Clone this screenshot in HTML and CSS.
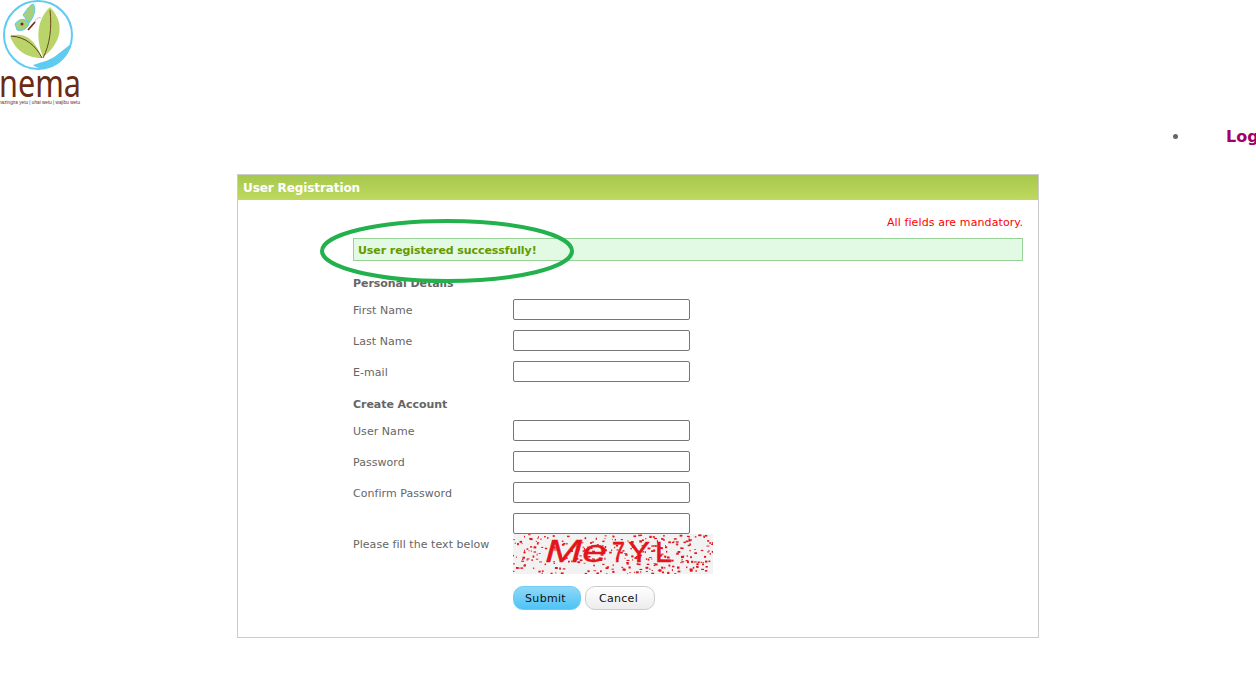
FILE: index.html
```html
<!DOCTYPE html>
<html lang="en">
<head>
    <meta charset="UTF-8">
    <meta name="viewport" content="width=device-width, initial-scale=1.0">
    <title>User Registration</title>
    <link rel="stylesheet" href="styles.css">
</head>
<body>
    <div class="header">
        <svg class="logo" width="90" height="110" viewBox="0 0 90 110">
            <circle cx="38" cy="35" r="34" fill="#fff" stroke="#5fcbf1" stroke-width="2"/>
            <!-- big leaf -->
            <path d="M50 7C36 20 36 40 43 57C58 46 68 26 50 7Z" fill="#b9d56a"/>
            <path d="M50 10C52 28 50 44 43 58" fill="none" stroke="#6b4a1e" stroke-width="1"/>
            <!-- small leaf -->
            <path d="M10 36C20 33 33 34 42 58C28 58 16 52 10 36Z" fill="#b9d56a"/>
            <path d="M11 36C26 37 36 46 42 58" fill="none" stroke="#6b3a1e" stroke-width="1"/>
            <!-- butterfly -->
            <path d="M23 15C27 9 30 5 33 4C37 8 34 17 29 23Z" fill="#a5d07c" stroke="#5fcbf1" stroke-width="1"/>
            <path d="M15 24C19 18 26 18 29 23C28 29 21 32 17 30Z" fill="#a5d07c" stroke="#5fcbf1" stroke-width="1"/>
            <circle cx="22" cy="24" r="1.500" fill="#7a2a1a"/>
            <path d="M28 30L35 22" stroke="#6b2a14" stroke-width="1.600"/>
            <path d="M35 22C36 18 39 17 41 18" fill="none" stroke="#a88" stroke-width=".6"/>
            <!-- hand -->
            <path d="M33 65C42 62 52 60 58 54C63 50 67 47 71 44C70 54 60 65 48 68C42 69 36 68 33 65Z" fill="#5fcbf1"/>
            <text class="logo-name" x="-1" y="97" textLength="82" lengthAdjust="spacingAndGlyphs">nema</text>
            <text class="logo-tag" x="-1" y="104" textLength="81" lengthAdjust="spacingAndGlyphs">nazingira yetu | uhai wetu | wajibu wetu</text>
        </svg>
    </div>

    <ul class="nav">
        <li><a href="#">Login</a></li>
    </ul>

    <div class="box">
        <div class="box-title">User Registration</div>
        <div class="box-body">
            <p class="mandatory">All fields are mandatory.</p>
            <div class="message">User registered successfully!</div>
            <svg class="circled" width="258" height="68" viewBox="0 0 258 68">
                <ellipse cx="128" cy="33" rx="125" ry="30" fill="none" stroke="#22b14c" stroke-width="4"/>
            </svg>

            <h3 class="section first">Personal Details</h3>
            <div class="row"><label>First Name</label><input type="text"></div>
            <div class="row"><label>Last Name</label><input type="text"></div>
            <div class="row"><label>E-mail</label><input type="text"></div>

            <h3 class="section">Create Account</h3>
            <div class="row"><label>User Name</label><input type="text"></div>
            <div class="row"><label>Password</label><input type="password"></div>
            <div class="row"><label>Confirm Password</label><input type="password"></div>

            <div class="row captcha-row">
                <label>Please fill the text below</label>
                <div class="captcha">
                    <input type="text">
                    <svg id="captchaImg" class="captcha-img" width="200" height="40" viewBox="0 0 200 40">
                        <rect width="200" height="40" fill="#f2f2f2"/>
                        <g id="captchaDots" fill="#e2141c"></g>
                        <text class="captcha-big" x="32" y="28" textLength="62" lengthAdjust="spacingAndGlyphs">Me</text>
                        <text class="captcha-small" x="99" y="28" textLength="13" lengthAdjust="spacingAndGlyphs">7</text>
                        <text class="captcha-small" x="115" y="28" textLength="22" lengthAdjust="spacingAndGlyphs">Y</text>
                        <text class="captcha-small" x="142" y="28" textLength="17" lengthAdjust="spacingAndGlyphs">L</text>
                    </svg>
                </div>
            </div>

            <div class="buttons">
                <button class="btn btn-submit">Submit</button>
                <button class="btn btn-cancel">Cancel</button>
            </div>
        </div>
    </div>

    <script src="captcha.js"></script>
</body>
</html>
```

FILE: styles.css
```css
* {
    box-sizing: border-box;
}

html, body {
    overflow: hidden;
}

body {
    margin: 0;
    height: 692px;
    background-color: #fff;
    font-family: 'DejaVu Sans', Verdana, sans-serif;
    font-size: 11px;
    color: #666;
}

.header {
    height: 126px;
}

.logo {
    display: block;
}

.logo-name {
    font-family: 'Noto Sans', sans-serif;
    font-size: 39px;
    fill: #6b2a14;
}

.logo-tag {
    font-family: 'Liberation Sans', sans-serif;
    font-size: 6px;
    fill: #6b2a14;
}

.nav {
    margin: 0;
    padding: 0 0 0 1190px;
    height: 48px;
    width: 1400px;
    color: #666;
}

.nav li {
    padding-left: 36px;
    line-height: 21px;
    font-size: 16px;
}

.nav a {
    font-weight: bold;
    color: #a00068;
    text-decoration: none;
}

.box {
    position: relative;
    margin-left: 237px;
    width: 802px;
    height: 464px;
    border: 1px solid #ccc;
}

.box-title {
    height: 25px;
    padding: 1px 0 0 5px;
    line-height: 25px;
    font-size: 12px;
    font-weight: bold;
    letter-spacing: -.1px;
    color: #fff;
    background: linear-gradient(#a6c84c, #bfd95f);
}

.box-body {
    padding: 0 15px 0 115px;
}

.mandatory {
    margin: 0;
    padding-top: 16px;
    height: 38px;
    line-height: 14px;
    text-align: right;
    letter-spacing: .1px;
    color: #f00;
}

.message {
    height: 23px;
    padding: 1px 0 0 4px;
    line-height: 21px;
    font-weight: bold;
    letter-spacing: -.08px;
    color: #669900;
    background-color: #e2f9e3;
    border: 1px solid #99d199;
}

.circled {
    position: absolute;
    left: 81px;
    top: 43px;
}

.section {
    margin: 0 0 8px;
    height: 20px;
    padding-top: 6px;
    line-height: 14px;
    font-size: 11px;
    font-weight: bold;
    letter-spacing: -.05px;
}

.section.first {
    height: 30px;
    padding-top: 16px;
}

.row {
    display: flex;
    align-items: center;
    height: 21px;
    margin-bottom: 10px;
}

.row label {
    width: 160px;
    padding-top: 1px;
    letter-spacing: .05px;
}

.row input {
    width: 177px;
    height: 21px;
    padding: 0 3px;
    background: #fff;
    border: 1px solid #767676;
    border-radius: 2px;
}

.captcha-row {
    height: auto;
    margin-bottom: 0;
}

.captcha-row label {
    padding-top: 2px;
}

.captcha {
    display: flex;
    flex-direction: column;
    align-items: flex-start;
}

.captcha-img {
    display: block;
}

.captcha-big, .captcha-small {
    font-family: 'Liberation Sans', sans-serif;
    fill: #e2141c;
}

.captcha-big {
    font-size: 32px;
    font-style: italic;
    stroke: #e2141c;
    stroke-width: .3px;
}

.captcha-small {
    font-size: 30px;
    stroke: #e2141c;
    stroke-width: .5px;
}

.buttons {
    display: flex;
    gap: 4px;
    margin: 12px 0 0 160px;
}

.btn {
    height: 24px;
    padding: 0 3px 0 0;
    font-family: 'DejaVu Sans', Verdana, sans-serif;
    font-size: 11px;
    letter-spacing: .3px;
    color: #111;
    border-radius: 10px;
    cursor: pointer;
}

.btn-submit {
    width: 68px;
    border: 1px solid #6fcdf5;
    background: linear-gradient(#8ed8f8, #4fc3f4);
}

.btn-cancel {
    width: 70px;
    border: 1px solid #ccc;
    background: linear-gradient(#fff, #ececec);
}
```

FILE: captcha.js
```js
// speckles behind the captcha text
var dots = document.getElementById('captchaDots');
var seed = 7;

function rnd() {
    seed = (seed * 16807) % 2147483647;
    return seed / 2147483647;
}

for (var i = 0; i < 320; i++) {
    var dot = document.createElementNS('http://www.w3.org/2000/svg', 'rect');
    dot.setAttribute('x', (rnd() * 200).toFixed(1));
    dot.setAttribute('y', (rnd() * 40).toFixed(1));
    dot.setAttribute('width', (0.8 + rnd() * 2.2).toFixed(1));
    dot.setAttribute('height', (0.8 + rnd() * 1.4).toFixed(1));
    dots.appendChild(dot);
}
```
